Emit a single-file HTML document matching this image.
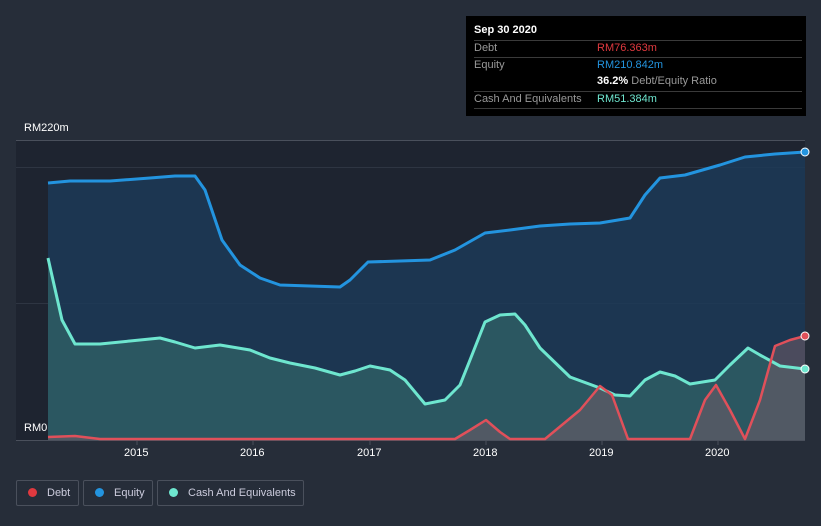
<!DOCTYPE html><html><head><style>
body{margin:0;width:821px;height:526px;background:#262d39;font-family:"Liberation Sans",sans-serif;position:relative;overflow:hidden}
.t{position:absolute;color:#fff;font-size:11px}
.tip{position:absolute;left:466px;top:16px;width:340px;height:100px;background:#000}
.tip div{position:absolute;font-size:11px;white-space:nowrap}
.ln{position:absolute;left:8px;width:328px;height:1px;background:#3a3a3a}
.leg{position:absolute;top:480px;height:26px;border:1px solid #4a505c;border-radius:2px;color:#ccd;font-size:11px;line-height:24px;box-sizing:border-box;white-space:nowrap}
.leg i{display:inline-block;width:9px;height:9px;border-radius:50%;margin:0 10px 0 11px;vertical-align:-1px}
</style></head><body>
<svg width="821" height="526" style="position:absolute;left:0;top:0">
<rect x="16" y="140" width="789" height="300" fill="#1e2430"/>
<line x1="16" y1="140.5" x2="805" y2="140.5" stroke="#4a505c"/>
<line x1="16" y1="167.5" x2="805" y2="167.5" stroke="#2e3542"/>
<line x1="16" y1="303.5" x2="805" y2="303.5" stroke="#2e3542"/>
<line x1="16" y1="440.5" x2="805" y2="440.5" stroke="#4a505c"/>
<g stroke="#4a505c"><line x1="137" y1="440" x2="137" y2="445"/><line x1="253" y1="440" x2="253" y2="445"/><line x1="370" y1="440" x2="370" y2="445"/><line x1="486" y1="440" x2="486" y2="445"/><line x1="602" y1="440" x2="602" y2="445"/><line x1="718" y1="440" x2="718" y2="445"/></g>
<path d="M48,183 L70,181 L110,181 L150,178 L175,176 L195,176 L205,190 L222,240 L240,265 L260,278 L280,285 L310,286 L340,287 L350,280 L368,262 L400,261 L430,260 L455,250 L485,233 L510,230 L540,226 L570,224 L600,223 L630,218 L645,195 L660,178 L685,175 L720,165 L745,157 L775,154 L805,152 L805,440 L48,440Z" fill="#1c3a57" opacity="0.85"/>
<path d="M48,258 L62,320 L75,344 L100,344 L130,341 L160,338 L175,342 L195,348 L220,345 L250,350 L270,358 L290,363 L315,368 L340,375 L355,371 L370,366 L390,370 L405,380 L425,404 L445,400 L460,385 L470,360 L485,322 L500,315 L515,314 L525,325 L540,348 L570,377 L600,388 L615,395 L630,396 L645,380 L660,372 L675,376 L690,384 L715,380 L730,365 L748,348 L760,355 L780,366 L805,369 L805,440 L48,440Z" fill="#2d5b63" opacity="0.9"/>
<path d="M48,437 L75,436 L100,439 L455,439 L470,430 L486,420 L500,432 L510,439 L545,439 L580,410 L600,386 L612,395 L628,439 L690,439 L705,400 L716,385 L730,410 L745,439 L760,400 L775,346 L790,340 L805,336 L805,440 L48,440Z" fill="#6a5a66" opacity="0.6"/>
<path d="M48,183 L70,181 L110,181 L150,178 L175,176 L195,176 L205,190 L222,240 L240,265 L260,278 L280,285 L310,286 L340,287 L350,280 L368,262 L400,261 L430,260 L455,250 L485,233 L510,230 L540,226 L570,224 L600,223 L630,218 L645,195 L660,178 L685,175 L720,165 L745,157 L775,154 L805,152" fill="none" stroke="#2394df" stroke-width="3" stroke-linejoin="round"/>
<path d="M48,258 L62,320 L75,344 L100,344 L130,341 L160,338 L175,342 L195,348 L220,345 L250,350 L270,358 L290,363 L315,368 L340,375 L355,371 L370,366 L390,370 L405,380 L425,404 L445,400 L460,385 L470,360 L485,322 L500,315 L515,314 L525,325 L540,348 L570,377 L600,388 L615,395 L630,396 L645,380 L660,372 L675,376 L690,384 L715,380 L730,365 L748,348 L760,355 L780,366 L805,369" fill="none" stroke="#6ee6cf" stroke-width="3" stroke-linejoin="round"/>
<path d="M48,437 L75,436 L100,439 L455,439 L470,430 L486,420 L500,432 L510,439 L545,439 L580,410 L600,386 L612,395 L628,439 L690,439 L705,400 L716,385 L730,410 L745,439 L760,400 L775,346 L790,340 L805,336" fill="none" stroke="#e0505a" stroke-width="2.5" stroke-linejoin="round"/>
<circle cx="805" cy="152" r="4" fill="#2394df" stroke="#fff"/>
<circle cx="805" cy="336" r="4" fill="#e0505a" stroke="#fff"/>
<circle cx="805" cy="369" r="4" fill="#6ee6cf" stroke="#fff"/>
</svg>
<div class="t" style="left:24px;top:122px">RM220m</div>
<div class="t" style="left:24px;top:422px">RM0</div>
<div class="t" style="left:124px;top:447px">2015</div>
<div class="t" style="left:240px;top:447px">2016</div>
<div class="t" style="left:357px;top:447px">2017</div>
<div class="t" style="left:473px;top:447px">2018</div>
<div class="t" style="left:589px;top:447px">2019</div>
<div class="t" style="left:705px;top:447px">2020</div>
<div class="tip">
<div style="left:8px;top:8px;color:#fff;font-weight:bold">Sep 30 2020</div>
<div class="ln" style="top:24px"></div>
<div style="left:8px;top:26px;color:#999">Debt</div><div style="left:131px;top:26px;color:#e0393f">RM76.363m</div>
<div class="ln" style="top:41px"></div>
<div style="left:8px;top:43px;color:#999">Equity</div><div style="left:131px;top:43px;color:#2394df">RM210.842m</div>
<div style="left:131px;top:59px;color:#999"><b style="color:#fff">36.2%</b> Debt/Equity Ratio</div>
<div class="ln" style="top:75px"></div>
<div style="left:8px;top:77px;color:#999">Cash And Equivalents</div><div style="left:131px;top:77px;color:#6ee6cf">RM51.384m</div>
<div class="ln" style="top:92px"></div>
</div>
<div class="leg" style="left:16px;width:63px"><i style="background:#e0393f"></i>Debt</div>
<div class="leg" style="left:83px;width:70px"><i style="background:#2394df"></i>Equity</div>
<div class="leg" style="left:157px;width:147px"><i style="background:#6ee6cf"></i>Cash And Equivalents</div>
</body></html>
